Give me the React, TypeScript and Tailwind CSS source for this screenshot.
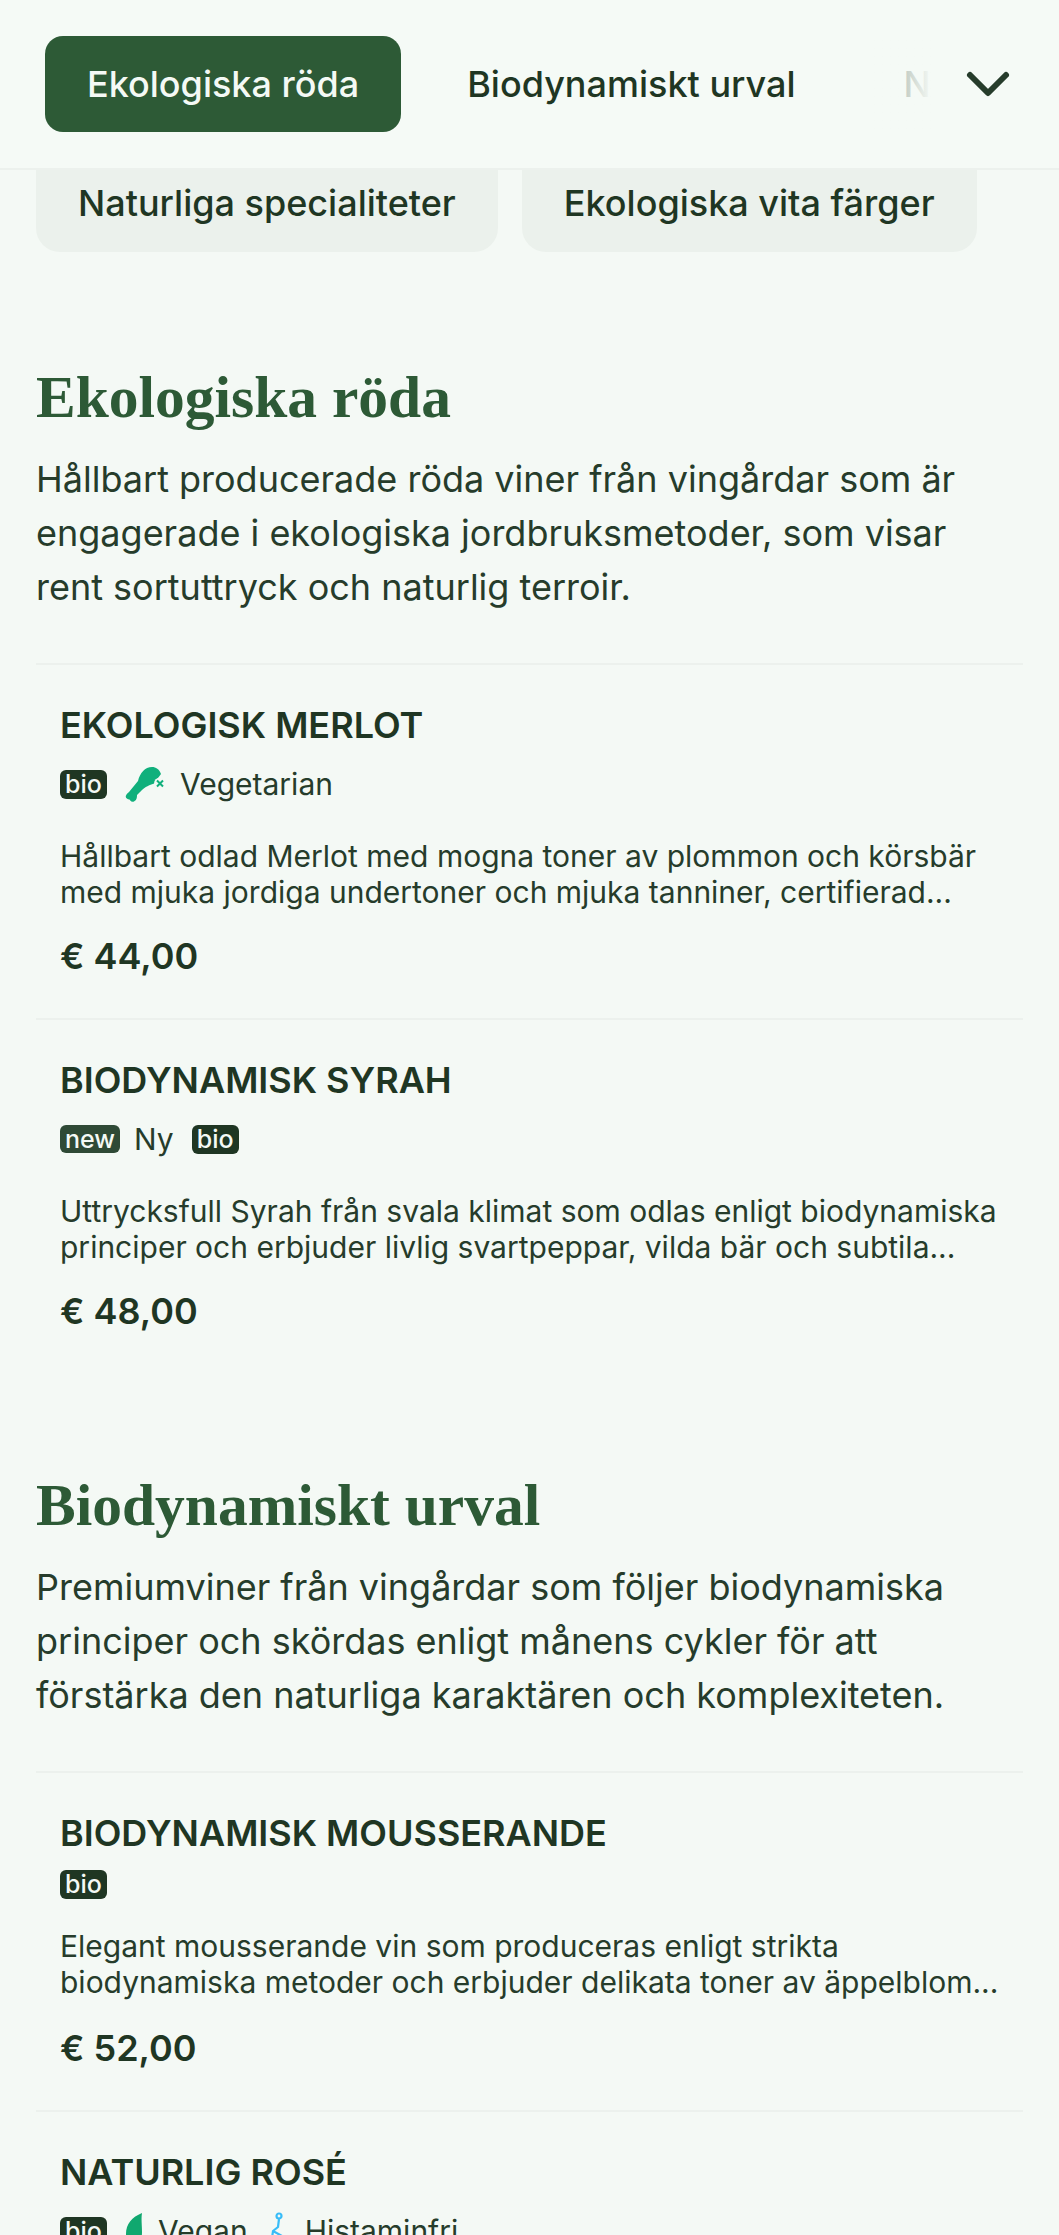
import React from "react";
import { ChevronDown } from "lucide-react";

function Bio() {
  return <span className="inline-flex h-[29px] w-[47px] items-center justify-center rounded-[6px] bg-[#1f3623] text-[25px] font-medium leading-none text-[#f4f9f5]">bio</span>;
}
function New() {
  return <span className="inline-flex h-[28px] w-[60px] items-center justify-center rounded-[6px] bg-[#2f4a36] text-[25px] font-medium leading-none text-[#f4f9f5]">new</span>;
}
function Drumstick() {
  return (
    <svg viewBox="0 0 41 36" className="h-[36px] w-[41px]" aria-hidden="true">
      <path d="M4 26L13 15C15 7 20 1 27 1C31 1 34 3 36 8L33 12L31 17C24 19 20 21 17 24L12 29C12 31 12 34 9 35.5C6 36.5 5 34 4.5 33.5C2 33.5 0 31.5 1 29.5C1.5 28 3 27 4 26Z" fill="#10b07c" />
      <circle cx="35" cy="17.5" r="6" fill="#f4f9f5" />
      <path d="M32 14.5l6 6M38 14.5l-6 6" stroke="#10b07c" strokeWidth="2" fill="none" />
    </svg>
  );
}
function Leaf() {
  return (
    <svg viewBox="0 0 18 38" className="h-[38px] w-[18px]" aria-hidden="true">
      <path d="M17 1C7 5 1 12 1 22c0 7 3 12 8 14 6-3 8-9 8-16 0-7-1-13 0-19z" fill="#10a86f" />
    </svg>
  );
}
function Mol() {
  return (
    <svg viewBox="0 0 24 38" className="h-[38px] w-[24px]" aria-hidden="true" fill="none" stroke="#38bdf8" strokeWidth="2.2">
      <circle cx="13" cy="4" r="2.5" />
      <path d="M13 7l-1 8-5 4-1 7-5 4M7 19l9 5 0 7 7 0" />
    </svg>
  );
}

type Item = { title: string; tags: React.ReactNode; lines?: [string, string]; price?: string; compact?: boolean };

function Entry({ title, tags, lines, price, compact }: Item) {
  return (
    <div className="border-t-2 border-[#ecf1ed] pl-[24px] pt-[38px] pb-[40px]">
      <h3 className="text-[36px] font-semibold leading-[44px] text-[#1f3623]">{title}</h3>
      {compact ? (
        <div className="mt-[15px] flex h-[29px] items-center">{tags}</div>
      ) : (
        <div className="mt-[18px] flex h-[38px] items-center text-[30px] leading-[38px] text-[#263c2b]">{tags}</div>
      )}
      {lines && (
        <p className={compact ? "mt-[29px] text-[30px] leading-[36px] text-[#263c2b]" : "mt-[35px] text-[30px] leading-[36px] text-[#263c2b]"}>
          {lines[0]}
          <br />
          {lines[1]}
        </p>
      )}
      {price && <p className={compact ? "mt-[26px] text-[36px] font-semibold leading-[44px] text-[#1f3623]" : "mt-[24px] text-[36px] font-semibold leading-[44px] text-[#1f3623]"}>{price}</p>}
    </div>
  );
}

function Section({ title, lines, children, className }: { title: string; lines: string[]; children: React.ReactNode; className: string }) {
  return (
    <section className={className}>
      <h2 className="font-['Liberation_Serif',serif] text-[59.5px] font-bold leading-[70px] text-[#2d5a36]">{title}</h2>
      <p className="mt-[20px] text-[36px] leading-[54px] text-[#263c2b]">
        {lines.map((l) => (
          <span key={l} className="block">{l}</span>
        ))}
      </p>
      <div className="mt-[49px]">{children}</div>
    </section>
  );
}

export default function App() {
  return (
    <div className="h-[2235px] w-[1059px] overflow-hidden bg-[#f4f9f5] font-['Inter',sans-serif]">
      <header className="flex h-[170px] items-center border-b-2 border-[#ecf1ed] bg-[#f5faf6] pl-[45px] pr-[35px]">
        <div className="relative flex min-w-0 flex-1 items-center gap-[24px] overflow-hidden">
          <span className="shrink-0 rounded-[18px] bg-[#2d5a36] px-[42px] py-[24px] text-[36px] font-medium leading-[48px] text-[#f4f9f5]">Ekologiska röda</span>
          <span className="shrink-0 px-[42px] py-[24px] text-[36px] font-medium leading-[48px] text-[#1f3623]">Biodynamiskt urval</span>
          <span className="shrink-0 px-[42px] py-[24px] text-[36px] font-medium leading-[48px] text-[#1f3623]">Naturliga specialiteter</span>
          <span className="absolute inset-y-0 right-0 w-[60px] bg-gradient-to-l from-[#f5faf6] via-[#f5faf6]/75 to-[#f5faf6]/50" />
        </div>
        <ChevronDown className="ml-[20px] h-[72px] w-[72px] shrink-0 text-[#263c2b]" strokeWidth={2} />
      </header>
      <div className="flex gap-[24px] px-[36px]">
        <span className="rounded-b-[24px] bg-[#ebf1ec] px-[42px] pb-[25px] pt-[9px] text-[36px] font-medium leading-[48px] text-[#1f3623]">Naturliga specialiteter</span>
        <span className="rounded-b-[24px] bg-[#ebf1ec] px-[42px] pb-[25px] pt-[9px] text-[36px] font-medium leading-[48px] text-[#1f3623]">Ekologiska vita färger</span>
      </div>
      <Section
        className="mx-[36px] mt-[110px]"
        title="Ekologiska röda"
        lines={["Hållbart producerade röda viner från vingårdar som är", "engagerade i ekologiska jordbruksmetoder, som visar", "rent sortuttryck och naturlig terroir."]}
      >
        <Entry
          title="EKOLOGISK MERLOT"
          tags={<><Bio /><span className="ml-[18px] mr-[14px]"><Drumstick /></span>Vegetarian</>}
          lines={["Hållbart odlad Merlot med mogna toner av plommon och körsbär", "med mjuka jordiga undertoner och mjuka tanniner, certifierad..."]}
          price="€ 44,00"
        />
        <Entry
          title="BIODYNAMISK SYRAH"
          tags={<><New /><span className="ml-[14px] mr-[18px]">Ny</span><Bio /></>}
          lines={["Uttrycksfull Syrah från svala klimat som odlas enligt biodynamiska", "principer och erbjuder livlig svartpeppar, vilda bär och subtila..."]}
          price="€ 48,00"
        />
      </Section>
      <Section
        className="mx-[36px] mt-[97px]"
        title="Biodynamiskt urval"
        lines={["Premiumviner från vingårdar som följer biodynamiska", "principer och skördas enligt månens cykler för att", "förstärka den naturliga karaktären och komplexiteten."]}
      >
        <Entry
          compact
          title="BIODYNAMISK MOUSSERANDE"
          tags={<Bio />}
          lines={["Elegant mousserande vin som produceras enligt strikta", "biodynamiska metoder och erbjuder delikata toner av äppelblom..."]}
          price="€ 52,00"
        />
        <Entry
          title="NATURLIG ROSÉ"
          tags={<><Bio /><span className="ml-[18px] mr-[15px]"><Leaf /></span>Vegan<span className="ml-[18px] mr-[15px]"><Mol /></span>Histaminfri</>}
        />
      </Section>
    </div>
  );
}
